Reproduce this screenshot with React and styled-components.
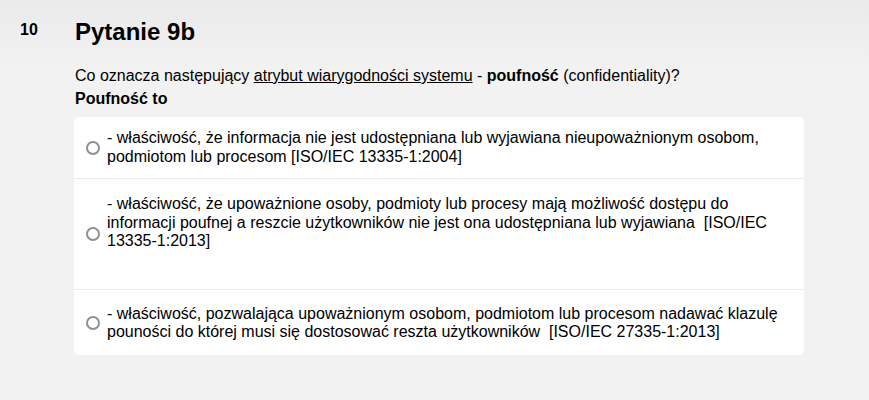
import React from 'react'
import styled, { createGlobalStyle } from 'styled-components'

const GlobalStyle = createGlobalStyle`
    html, body {
        margin: 0;
        padding: 0;
    }
    body {
        min-height: 400px;
        background: linear-gradient(#eaeaea 0, #f2f2f2 70px, #f2f2f2 100%);
        font-family: "Liberation Sans", Arial, sans-serif;
        color: #000;
    }
`

const Page = styled.div`
    display: grid;
    grid-template-columns: 54px 730px;
    padding: 18px 0 0 20px;
`

const Number = styled.div`
    font-size: 16px;
    font-weight: bold;
    line-height: 18px;
    padding-top: 3px;
`

const Content = styled.div`
    display: flex;
    flex-direction: column;
`

const Title = styled.h1`
    margin: 0 0 18px 1px;
    font-size: 24px;
    line-height: 28px;
    font-weight: bold;
`

const Question = styled.p`
    margin: 0 0 0 1px;
    font-size: 16px;
    line-height: 23px;
`

const Lead = styled.p`
    margin: 0 0 7px 1px;
    font-size: 16px;
    line-height: 23px;
    font-weight: bold;
`

const Underlined = styled.span`
    text-decoration: underline;
`

const Card = styled.div`
    background: #fff;
    border-radius: 5px;
    display: flex;
    flex-direction: column;
`

const Row = styled.label`
    display: flex;
    align-items: center;
    gap: 7px;
    padding: ${p => p.$pad};
    border-top: ${p => (p.$first ? 'none' : '1px solid #ececec')};
    cursor: pointer;
`

const Radio = styled.span`
    flex: none;
    width: 10px;
    height: 10px;
    border: 2px solid #8f8f94;
    border-radius: 50%;
`

const Text = styled.span`
    font-size: 16px;
    line-height: 18.5px;
    max-width: 684px;
    margin-bottom: ${p => p.$tail || 0}px;
`

const options = [
    {
        pad: '12px 16px 12px 12px',
        text: '- właściwość, że informacja nie jest udostępniana lub wyjawiana nieupoważnionym osobom, podmiotom lub procesom [ISO/IEC 13335-1:2004]',
    },
    {
        pad: '16px 16px 16px 12px',
        text: '- właściwość, że upoważnione osoby, podmioty lub procesy mają możliwość dostępu do informacji poufnej a reszcie użytkowników nie jest ona udostępniana lub wyjawiana \u00a0[ISO/IEC 13335-1:2013]',
        tail: 22,
    },
    {
        pad: '15px 16px 13px 12px',
        text: '- właściwość, pozwalająca upoważnionym osobom, podmiotom lub procesom nadawać klazulę pouności do której musi się dostosować reszta użytkowników \u00a0[ISO/IEC 27335-1:2013]',
    },
]

const App = () => {
    return (
        <>
            <GlobalStyle />
            <Page>
                <Number>10</Number>
                <Content>
                    <Title>Pytanie 9b</Title>
                    <Question>
                        Co oznacza następujący <Underlined>atrybut wiarygodności systemu</Underlined> - <b>poufność</b> (confidentiality)?
                    </Question>
                    <Lead>Poufność to</Lead>
                    <Card>
                        {options.map((o, i) => (
                            <Row key={i} $pad={o.pad} $first={i === 0}>
                                <Radio />
                                <Text $tail={o.tail}>{o.text}</Text>
                            </Row>
                        ))}
                    </Card>
                </Content>
            </Page>
        </>
    )
}

export default App
